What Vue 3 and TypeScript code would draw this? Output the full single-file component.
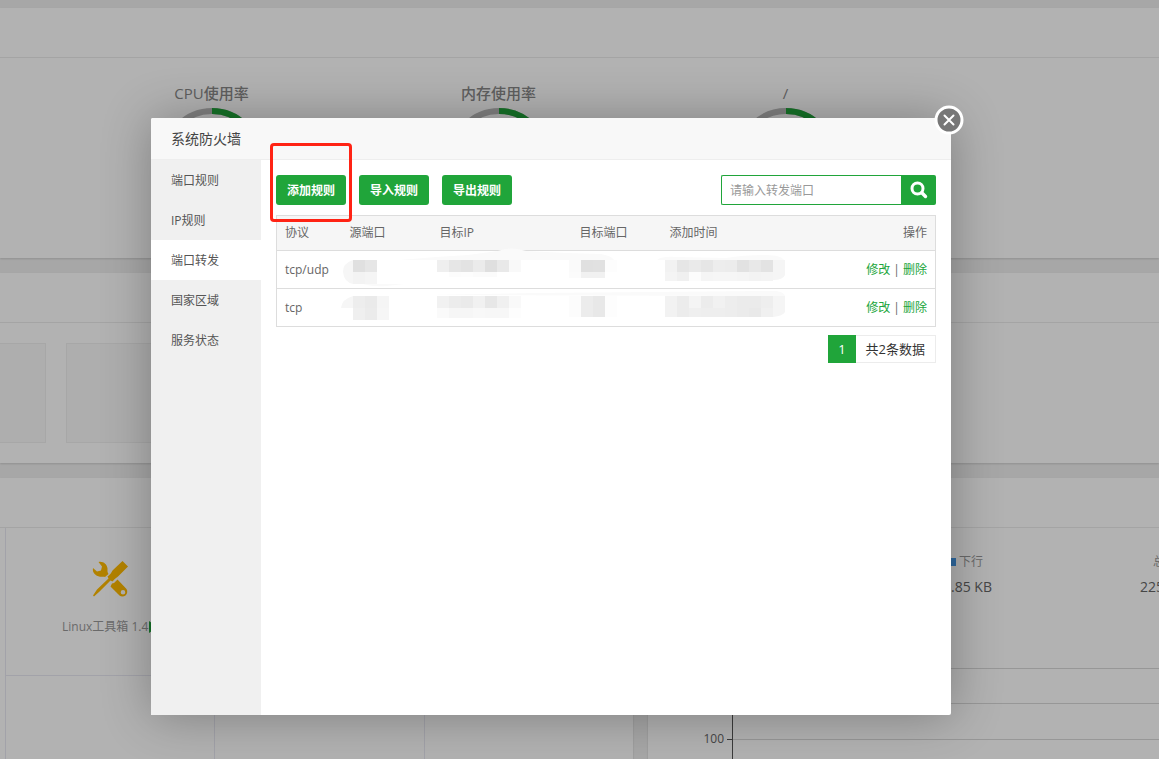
<script setup lang="ts">
import { ref } from 'vue'

interface Rule {
  protocol: string
}

type Block = { x: number; y: number; w: number; h: number; fill: string }

const gauges = ['CPU使用率', '内存使用率', '/']
const tabs = ['端口规则', 'IP规则', '端口转发', '国家区域', '服务状态']
const actions = ['添加规则', '导入规则', '导出规则']
const activeTab = ref('端口转发')
const keyword = ref('')
const rules: Rule[] = [{ protocol: 'tcp/udp' }, { protocol: 'tcp' }]

const strip = (x: number, y: number, h: number, shades: string): Block[] =>
  shades.split(' ').map((s, i) => ({ x: x + i * 12, y, w: 12, h, fill: '#' + s + s + s }))

const blocks: Block[] = [
  ...strip(77, 45, 12, 'e0 e6'),
  ...strip(77, 57, 12, 'f3 f5'),
  ...strip(161, 45, 12, 'ef e6 e3 eb df e9 f9'),
  ...strip(173, 57, 5, 'fc fd fb fb'),
  ...strip(293, 45, 12, 'fa e0 e1 fd'),
  ...strip(293, 57, 6, 'fb f1 f1'),
  ...strip(389, 45, 12, 'f2 e6 ea e6 ed ec e2 e8 e3'),
  ...strip(389, 57, 9, 'f4 f0 fc f5 f6 f6 f5 f3 f4'),
  ...strip(77, 81, 12, 'ed ea f5'),
  ...strip(77, 93, 12, 'ef eb f6'),
  ...strip(161, 81, 12, 'f1 ec ea f1 e7 f0 f9'),
  ...strip(161, 93, 10, 'fa f6 f6 f8 f7 f7 fd'),
  ...strip(293, 81, 21, 'fc ec e8 fd'),
  ...strip(389, 81, 12, 'f2 ec f4 ec f1 ed eb eb ee'),
  ...strip(389, 93, 9, 'f2 ec ef ee ee ed eb e9 f0'),
]
</script>

<template>
  <div class="page">
    <main class="dashboard">
      <section class="card status">
        <header class="card-head"></header>
        <div class="gauges">
          <div v-for="g in gauges" :key="g" class="gauge">
            <h3>{{ g }}</h3>
            <svg width="100" height="100" viewBox="0 0 100 100" aria-hidden="true">
              <circle cx="50" cy="50" r="47" fill="none" stroke="#bbb" stroke-width="6" />
              <path d="M50 3A47 47 0 0 1 97 50" fill="none" stroke="#20a53a" stroke-width="6" />
            </svg>
          </div>
        </div>
      </section>

      <section class="card">
        <header class="card-head"></header>
        <div class="tiles">
          <div class="tile first"></div>
          <div class="tile"></div>
        </div>
      </section>

      <div class="bottom">
        <section class="card software">
          <header class="card-head"></header>
          <div class="apps">
            <div class="app">
              <svg width="36" height="36" viewBox="0 0 36 36" aria-hidden="true">
                <path
                  fill="#ffbb00"
                  fill-rule="evenodd"
                  d="M6.500 1C11 0 15 3 15.500 7.500C15.600 9.500 15 11 16.500 13L13 16C11.500 15.200 10 16 8 15.700C3.500 15 0 11.500 1 7L5 10.500L9 9.500L10 5.500ZM22 22L25.500 18.500L34.500 28C36 30.500 35 33 33.500 34.500C31.500 36 29 35.800 27.500 34.500L18.500 25.500L20 22.500ZM31 29A2.300 2.300 0 1 0 31 33.600A2.300 2.300 0 1 0 31 29Z"
                />
                <path
                  fill="#ffbb00"
                  d="M30.500 0L36 5.500L26 15.500C23.500 17.500 22.500 18 20.500 20.500L18.500 19.500L7 31L2 35.500L1 34.500L5 28.500L16.500 17.500L15.500 15.500C18.500 13.500 19 12 20.500 9.500Z"
                />
              </svg>
              <p>Linux工具箱 1.4<span class="play"></span></p>
            </div>
            <div v-for="n in 5" :key="n" class="app"></div>
          </div>
        </section>

        <section class="card traffic">
          <header class="card-head"></header>
          <div class="stats">
            <div class="stat">
              <p class="label"><i></i>下行</p>
              <p class="value">.85 KB</p>
            </div>
            <div class="stat">
              <p class="label total">总</p>
              <p class="value">225</p>
            </div>
          </div>
          <div class="chart">
            <div class="axis"><span>100</span></div>
            <div class="plot"><div></div><div></div><div></div></div>
          </div>
        </section>
      </div>
    </main>

    <div class="overlay">
      <div class="modal" role="dialog" aria-labelledby="dialog-title">
        <h2 id="dialog-title">系统防火墙</h2>
        <button class="close" type="button" aria-label="关闭">
          <svg width="30" height="30" viewBox="0 0 30 30" aria-hidden="true">
            <circle cx="15" cy="15" r="13" fill="#777" stroke="#fff" stroke-width="3" />
            <path d="M10.500 10.500L19.500 19.500M19.500 10.500L10.500 19.500" stroke="#fff" stroke-width="2" stroke-linecap="round" />
          </svg>
        </button>
        <div class="body">
          <nav class="tabs">
            <button
              v-for="t in tabs"
              :key="t"
              type="button"
              :class="{ active: t === activeTab }"
              @click="activeTab = t"
            >{{ t }}</button>
          </nav>
          <div class="content">
            <div class="toolbar">
              <button v-for="a in actions" :key="a" class="action" type="button">{{ a }}</button>
              <form class="search" @submit.prevent>
                <input v-model="keyword" type="text" placeholder="请输入转发端口" aria-label="请输入转发端口" />
                <button type="submit" aria-label="搜索">
                  <svg width="18" height="18" viewBox="0 0 18 18" aria-hidden="true">
                    <circle cx="7.500" cy="7.500" r="5.500" fill="none" stroke="#fff" stroke-width="3" />
                    <path d="M11.800 11.800L15.500 15.500" stroke="#fff" stroke-width="3.400" stroke-linecap="round" />
                  </svg>
                </button>
              </form>
              <div class="marker"></div>
            </div>

            <div class="table-wrap">
              <table>
                <colgroup>
                  <col class="c-proto" /><col class="c-src" /><col class="c-ip" /><col class="c-port" /><col /><col class="c-ops" />
                </colgroup>
                <thead>
                  <tr>
                    <th>协议</th><th>源端口</th><th>目标IP</th><th>目标端口</th><th>添加时间</th><th class="ops">操作</th>
                  </tr>
                </thead>
                <tbody>
                  <tr v-for="r in rules" :key="r.protocol">
                    <td>{{ r.protocol }}</td>
                    <td></td><td></td><td></td><td></td>
                    <td class="ops"><a href="#">修改</a> | <a href="#">删除</a></td>
                  </tr>
                </tbody>
              </table>
              <svg class="mosaic" width="660" height="112" viewBox="0 0 660 112" aria-hidden="true">
                <g fill="#fafafa">
                  <path d="M124 45L160 42L192 40L222 36Q236 31 250 36L290 38L325 39Q336 41 338 45Z" />
                  <path d="M381 45Q386 41 400 42L450 43Q468 40 490 40Q507 40 509 47L509 45Z" />
                  <path d="M153 80L260 78L500 76Q508 77 509 81Z" />
                  <path d="M87 69L128 69L110 71Q97 72 87 69Z" />
                </g>
                <path d="M77 45Q67 48 67 57Q68 67 77 69ZM77 81Q66 84 65 93H77Z" fill="#f6f6f6" />
                <path d="M497 45H509V60Q507 65 497 65ZM497 81H509V97Q507 101 497 102Z" fill="#f5f5f5" />
                <rect
                  v-for="(b, i) in blocks"
                  :key="i"
                  :x="b.x"
                  :y="b.y"
                  :width="b.w"
                  :height="b.h"
                  :fill="b.fill"
                />
              </svg>
            </div>

            <div class="pager">
              <span class="current">1</span>
              <span class="count">共2条数据</span>
            </div>
          </div>
        </div>
      </div>
    </div>
  </div>
</template>

<style>
body {
  margin: 0;
}
</style>

<style scoped>
* {
  box-sizing: border-box;
}
.page {
  position: relative;
  height: 100vh;
  overflow: hidden;
  background: #f0f0f0;
  color: #666;
  font: 12px/18px "Open Sans", "Noto Sans CJK SC", sans-serif;
}
h2,
h3,
p {
  margin: 0;
  font-weight: 400;
}
button,
input {
  padding: 0;
  border: 0;
  font: inherit;
}
button {
  cursor: pointer;
}
.dashboard {
  display: flex;
  flex-direction: column;
  gap: 15px;
  padding-top: 8px;
}
.card {
  background: #fff;
  box-shadow: 0 1px 2px rgba(0, 0, 0, 0.15);
}
.card-head {
  height: 50px;
  border-bottom: 1px solid #ebebeb;
}
.status {
  height: 250px;
}
.gauges {
  display: flex;
  padding: 25px 0 0 68px;
}
.gauge {
  display: flex;
  flex: 0 0 287px;
  flex-direction: column;
  align-items: center;
  gap: 5px;
}
.gauge h3 {
  color: #888;
  font-size: 15px;
  font-weight: 500;
  line-height: 20px;
}
.tiles {
  display: flex;
  gap: 20px;
  padding: 20px 0;
}
.tile {
  width: 200px;
  height: 100px;
  border: 1px solid #efefef;
  background: #f9f9f9;
}
.tile.first {
  width: 46px;
  border-left: 0;
}
.bottom {
  display: flex;
  gap: 15px;
}
.software {
  flex: 633 1 0;
  min-width: 0;
}
.traffic {
  flex: 511 1 0;
  min-width: 0;
}
.apps {
  display: grid;
  grid-template-columns: repeat(3, 1fr);
  padding-left: 5px;
}
.app {
  display: flex;
  flex-direction: column;
  align-items: center;
  height: 148px;
  padding-top: 33px;
  gap: 21px;
  border-bottom: 1px solid #e8e8f2;
  border-left: 1px solid #e8e8f2;
  color: #999;
}
.app p {
  display: flex;
  align-items: center;
  white-space: nowrap;
}
.play {
  margin-left: 1px;
  border: 6px solid transparent;
  border-right: 0;
  border-left: 9px solid #20a53a;
}
.stats {
  display: grid;
  grid-template-columns: 189px 62px;
  padding: 25px 0 0 303px;
}
.stat .label {
  display: flex;
  align-items: center;
  color: #999;
}
.stat .label i {
  width: 5px;
  height: 8px;
  margin-right: 3px;
  background: #4497e6;
}
.stat .total {
  padding-left: 13px;
}
.stat .value {
  margin-top: 6px;
  color: #666;
  font-size: 14px;
  line-height: 20px;
}
.chart {
  display: flex;
  margin-top: 71px;
}
.axis {
  display: flex;
  flex: 0 0 84px;
  flex-direction: column;
  align-items: flex-end;
  padding: 62px 0 0;
}
.axis span {
  display: flex;
  align-items: center;
  gap: 3px;
}
.axis span::after {
  width: 5px;
  height: 1px;
  background: #555;
  content: "";
}
.plot {
  flex: 1;
  border-left: 1px solid #555;
}
.plot div {
  height: 35px;
  border-top: 1px solid #d8d8d8;
}
.plot div + div {
  height: 36px;
}
.overlay {
  position: absolute;
  inset: 0;
  display: flex;
  padding: 118px 208px 44px 151px;
  background: rgba(0, 0, 0, 0.3);
}
.modal {
  position: relative;
  display: flex;
  flex: 1;
  flex-direction: column;
  border-radius: 2px;
  background: #fff;
  box-shadow: 1px 1px 50px rgba(0, 0, 0, 0.3);
}
.modal h2 {
  height: 42px;
  padding-left: 20px;
  border-bottom: 1px solid #eee;
  border-radius: 2px 2px 0 0;
  background: #f8f8f8;
  color: #444;
  font-size: 14px;
  line-height: 41px;
}
.close {
  position: absolute;
  top: -13px;
  right: -13px;
  width: 30px;
  height: 30px;
  border-radius: 50%;
  background: none;
}
.close svg {
  display: block;
}
.body {
  display: flex;
  flex: 1;
}
.tabs {
  display: flex;
  flex: 0 0 110px;
  flex-direction: column;
  background: #f0f0f0;
}
.tabs button {
  height: 40px;
  padding: 2px 0 0 20px;
  background: none;
  color: #555;
  text-align: left;
}
.tabs .active {
  background: #fff;
}
.content {
  flex: 1;
  min-width: 0;
  padding: 15px;
}
.toolbar {
  position: relative;
  z-index: 1;
  display: flex;
  gap: 13px;
}
.action {
  width: 70px;
  height: 30px;
  padding-top: 2px;
  border-radius: 3px;
  background: #20a53a;
  color: #fff;
  font-weight: 600;
}
.search {
  display: flex;
  width: 215px;
  margin-left: auto;
}
.search input {
  flex: 1;
  min-width: 0;
  height: 30px;
  padding: 0 8px;
  border: 1px solid #20a53a;
  border-right: 0;
  border-radius: 2px 0 0 2px;
  background: #fff;
  color: #555;
}
.search input::placeholder {
  color: #999;
  opacity: 1;
}
.search button {
  display: flex;
  flex: 0 0 35px;
  align-items: center;
  justify-content: center;
  border-radius: 0 2px 2px 0;
  background: #20a53a;
}
.marker {
  position: absolute;
  top: -32px;
  left: -6px;
  width: 82px;
  height: 79px;
  border: 3px solid #ff2314;
  border-radius: 4px;
  pointer-events: none;
}
.table-wrap {
  position: relative;
  margin-top: 10px;
}
table {
  width: 100%;
  border: 1px solid #ddd;
  border-collapse: collapse;
  table-layout: fixed;
}
.c-proto {
  width: 65px;
}
.c-src {
  width: 90px;
}
.c-ip {
  width: 140px;
}
.c-port {
  width: 90px;
}
.c-ops {
  width: 100px;
}
th,
td {
  height: 38px;
  padding: 0 8px;
  border-bottom: 1px solid #ddd;
  font-weight: 400;
  text-align: left;
  white-space: nowrap;
}
th {
  height: 35px;
  background: #f6f6f6;
}
.ops {
  text-align: right;
}
.ops a {
  color: #20a53a;
  text-decoration: none;
}
.mosaic {
  position: absolute;
  top: 0;
  left: 0;
  pointer-events: none;
}
.pager {
  display: flex;
  justify-content: flex-end;
  margin-top: 8px;
  color: #333;
  font-size: 13px;
  line-height: 26px;
}
.pager span {
  padding: 0 10px;
  border: 1px solid #ececec;
}
.pager .current {
  padding: 0 9px;
  border-color: #20a53a;
  background: #20a53a;
  color: #fff;
}
.pager .count {
  border-left: 0;
}
</style>
